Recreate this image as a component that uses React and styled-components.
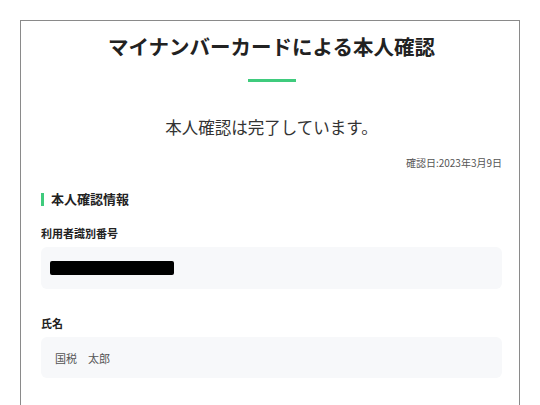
import React from 'react';
import styled, { createGlobalStyle } from 'styled-components';

const GlobalStyle = createGlobalStyle`
	html, body {
		margin: 0;
		padding: 0;
		background: #fff;
	}
	body {
		font-family: 'Noto Sans CJK JP', 'Noto Sans', sans-serif;
		color: #222;
	}
`;

const Page = styled.div`
	padding: 20px 20px 0;
`;

const Card = styled.section`
	border: 1px solid #8a8a8a;
	border-bottom: none;
	box-sizing: border-box;
	min-height: calc(100vh - 20px);
	padding: 12px 17px 0 20px;
	display: flex;
	flex-direction: column;
`;

const Title = styled.h1`
	margin: 0;
	font-size: 20.5px;
	line-height: 26px;
	font-weight: 700;
	text-align: center;
	color: #222;
`;

const Accent = styled.div`
	width: 48px;
	height: 3px;
	background: #3fcb7d;
	margin: 20px auto 0;
`;

const Lead = styled.p`
	margin: 33px 0 0;
	font-size: 16.5px;
	line-height: 24px;
	text-align: center;
	color: #333;
`;

const DateLine = styled.div`
	margin-top: 17px;
	font-size: 10px;
	line-height: 14px;
	text-align: right;
	color: #555;
`;

const SectionTitle = styled.h2`
	margin: 20px 0 0;
	display: flex;
	align-items: center;
	gap: 7px;
	font-size: 13px;
	line-height: 18px;
	font-weight: 700;
	color: #222;

	&::before {
		content: '';
		width: 3px;
		height: 13px;
		background: #3fcb7d;
	}
`;

const Label = styled.div`
	margin-top: ${(p) => p.$gap}px;
	font-size: 11px;
	line-height: 16px;
	font-weight: 700;
	color: #222;
`;

const Field = styled.div`
	margin-top: 6px;
	height: ${(p) => p.$h}px;
	box-sizing: border-box;
	background: #f7f8fa;
	border-radius: 6px;
	display: flex;
	align-items: center;
	padding: 0 14px 0 9px;
	font-size: 11px;
	color: #555;
`;

const Masked = styled.span`
	display: block;
	width: 124px;
	height: 14px;
	background: #000;
	border-radius: 2px;
`;

const Value = styled.span`
	padding-left: 5px;
	white-space: pre;
`;

export default function App() {
	return (
		<>
			<GlobalStyle />
			<Page>
				<Card>
					<Title>マイナンバーカードによる本人確認</Title>
					<Accent />
					<Lead>本人確認は完了しています。</Lead>
					<DateLine>確認日:2023年3月9日</DateLine>
					<SectionTitle>本人確認情報</SectionTitle>

					<Label $gap={17}>利用者識別番号</Label>
					<Field $h={42}>
						<Masked />
					</Field>

					<Label $gap={26}>氏名</Label>
					<Field $h={41}>
						<Value>国税　太郎</Value>
					</Field>
				</Card>
			</Page>
		</>
	);
}
